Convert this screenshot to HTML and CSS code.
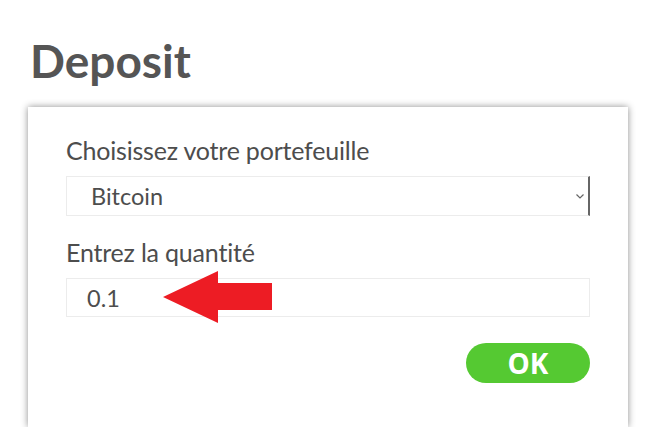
FILE: index.html
```html
<!DOCTYPE html>
<html lang="fr">
<head>
<meta charset="utf-8">
<title>Deposit</title>
<link rel="stylesheet" href="styles.css">
</head>
<body>
<main class="page">
  <h1 class="title">Deposit</h1>
  <section class="card">
    <label class="label" for="wallet">Choisissez votre portefeuille</label>
    <div class="select-wrap">
      <select id="wallet" class="select">
        <option>Bitcoin</option>
      </select>
      <svg class="chevron" width="8" height="5" viewBox="0 0 8 5"><path d="M0.5 0.5 L4 4 L7.5 0.5" fill="none" stroke="#666" stroke-width="1.2"/></svg>
    </div>
    <label class="label label-qty" for="qty">Entrez la quantité</label>
    <div class="input-wrap">
      <input id="qty" class="input" type="text" value="0.1">
      <svg class="arrow" width="110" height="52" viewBox="0 0 110 52"><polygon points="0,26 55,0 55,12 109,12 109,39 55,39 55,52" fill="#ed1c24"/></svg>
    </div>
    <div class="actions">
      <button class="ok" type="button">OK</button>
    </div>
  </section>
</main>
</body>
</html>
```
FILE: styles.css
```css
* { box-sizing: border-box; }
html, body { margin: 0; padding: 0; background: #fff; }
.page {
  padding: 33px 0 0 28px;
}
.title {
  margin: 0 0 0 2px;
  font-family: "Lato", "DejaVu Sans", sans-serif;
  font-weight: 700;
  font-size: 46px;
  line-height: 56px;
  color: #555;
  height: 74px;
}
.card {
  width: 600px;
  height: 320px;
  background: #fff;
  box-shadow: 0 0 7px rgba(0,0,0,0.45);
  padding: 28px 38px 0 38px;
  display: flex;
  flex-direction: column;
}
.label {
  font-family: "Lato", "Open Sans", sans-serif;
  font-size: 25px;
  letter-spacing: -0.2px;
  line-height: 30px;
  color: #4d4d4d;
  display: block;
}
.select-wrap {
  position: relative;
  margin-top: 11px;
  height: 40px;
}
.select {
  appearance: none;
  -webkit-appearance: none;
  width: 100%;
  height: 40px;
  border: 1px solid #ececec;
  border-right: 2px solid #666;
  background: #fff;
  font-family: "Lato", "Open Sans", sans-serif;
  font-size: 23.5px;
  color: #4d4d4d;
  padding: 0 0 0 24px;
  outline: none;
  border-radius: 0;
}
.chevron {
  position: absolute;
  right: 6px;
  top: 18px;
}
.label-qty {
  margin-top: 21px;
}
.input-wrap {
  position: relative;
  margin-top: 11px;
  height: 39px;
}
.input {
  width: 100%;
  height: 39px;
  border: 1px solid #ececec;
  font-family: "Lato", "Open Sans", sans-serif;
  font-size: 23.5px;
  color: #4d4d4d;
  padding: 0 0 0 20px;
  outline: none;
  border-radius: 0;
}
.arrow {
  position: absolute;
  left: 97px;
  top: -7px;
}
.actions {
  display: flex;
  justify-content: flex-end;
  margin-top: 26px;
}
.ok {
  width: 124px;
  height: 40px;
  border: none;
  border-radius: 20px;
  background: #55c932;
  color: #fff;
  font-family: "Open Sans", sans-serif;
  font-weight: 700;
  font-size: 28px;
  line-height: 40px;
  padding: 0;
}
```
